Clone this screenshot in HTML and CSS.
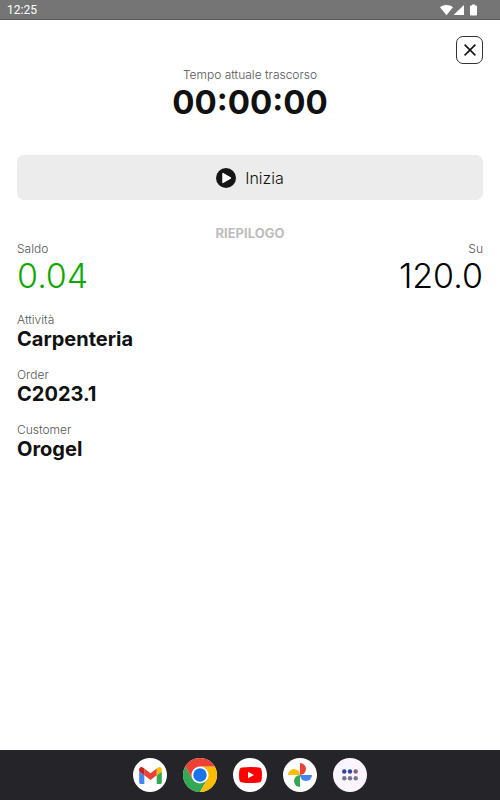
FILE: index.html
```
<!DOCTYPE html>
<html lang="it">
<head>
    <meta charset="UTF-8">
    <meta name="viewport" content="width=device-width, initial-scale=1.0">
    <title>Tempo attuale trascorso</title>
    <link rel="stylesheet" href="styles.css">
</head>
<body>

    <div class="status-bar">
        <span>12:25</span>
        <svg width="40" height="12" viewBox="0 0 40 12" fill="#fff">
            <!-- Wifi -->
            <path d="M0 3.2C3.6 0.2 9.4 0.2 13 3.2L6.5 11.2z" />
            <!-- Segnale -->
            <path d="M24 1v10H13.5z" />
            <!-- Batteria -->
            <path d="M32 .5h3v1h1.2q.8 0 .8.8v8.4q0 .8-.8.8h-5.4q-.8 0-.8-.8V2.3q0-.8.8-.8H32z" />
        </svg>
    </div>

    <main class="content">
        <div class="toolbar">
            <button class="close-button" type="button" aria-label="Chiudi">
                <svg width="12" height="12" viewBox="0 0 12 12" fill="none" stroke="#111" stroke-width="1.5">
                    <path d="M.6.6l10.8 10.8M11.4.6L.6 11.4" />
                </svg>
            </button>
        </div>

        <div class="timer">
            <span class="label">Tempo attuale trascorso</span>
            <span class="timer-value">00:00:00</span>
        </div>

        <button class="start-button" type="button">
            <svg width="20" height="20" viewBox="0 0 20 20">
                <circle cx="10" cy="10" r="10" fill="#151515" />
                <path d="M6.8 5.2v9.6l8.2-4.8z" fill="#fff" stroke="#fff" stroke-linejoin="round" />
            </svg>
            <span>Inizia</span>
        </button>

        <h2 class="summary-title">RIEPILOGO</h2>

        <div class="totals">
            <div class="total">
                <span class="label">Saldo</span>
                <span class="total-value positive">0.04</span>
            </div>
            <div class="total total-right">
                <span class="label">Su</span>
                <span class="total-value">120.0</span>
            </div>
        </div>

        <div class="details">
            <div class="detail">
                <span class="label">Attività</span>
                <span class="detail-value">Carpenteria</span>
            </div>
            <div class="detail">
                <span class="label">Order</span>
                <span class="detail-value">C2023.1</span>
            </div>
            <div class="detail">
                <span class="label">Customer</span>
                <span class="detail-value">Orogel</span>
            </div>
        </div>
    </main>

    <nav class="dock">
        <button class="app" type="button" aria-label="Gmail">
            <svg width="23" height="17" viewBox="52 42 88 66">
                <path fill="#4285f4" d="M58 108h14V74L52 59v43c0 3.32 2.69 6 6 6" />
                <path fill="#34a853" d="M120 108h14c3.32 0 6-2.69 6-6V59l-20 15" />
                <path fill="#fbbc04" d="M120 48v26l20-15v-8c0-7.42-8.47-11.65-14.4-7.2" />
                <path fill="#ea4335" d="M72 74V48l24 18 24-18v26L96 92" />
                <path fill="#c5221f" d="M52 51v8l20 15V48l-5.6-4.2c-5.94-4.45-14.4-.22-14.4 7.2" />
            </svg>
        </button>
        <button class="app" type="button" aria-label="Chrome">
            <svg width="34" height="34" viewBox="0 0 48 48">
                <circle cx="24" cy="24" r="12" fill="#fff" />
                <path fill="#34a853" d="M24 48A24 24 0 0 1 3.2154 12l10.3923 18A12 12 0 0 0 34.3923 30z" />
                <path fill="#fbbc04" d="M24 12h20.7846A24 24 0 0 1 24 48l10.3923-18A12 12 0 0 0 24 12z" />
                <path fill="#ea4335" d="M3.2154 12A24 24 0 0 1 44.7846 12H24a12 12 0 0 0-10.3923 18z" />
                <circle cx="24" cy="24" r="9.5" fill="#1a73e8" />
            </svg>
        </button>
        <button class="app" type="button" aria-label="YouTube">
            <svg width="23" height="16" viewBox="0 0 23 16">
                <path fill="#f00" d="M3 .5Q11.5-.5 20 .5q2.3.3 2.6 2.5.7 5 0 10-.3 2.2-2.6 2.5-8.5 1-17 0Q.7 15.2.4 13q-.7-5 0-10Q.7.8 3 .5z" />
                <path fill="#fff" d="M9 4.7v6.6L15 8z" />
            </svg>
        </button>
        <button class="app" type="button" aria-label="Foto">
            <svg width="24" height="24" viewBox="0 0 24 24">
                <path fill="#ea4335" d="M12 0a6 6 0 0 1 0 12z" />
                <path fill="#4285f4" d="M24 12a6 6 0 0 1-12 0z" />
                <path fill="#34a853" d="M12 24a6 6 0 0 1 0-12z" />
                <path fill="#fbbc04" d="M0 12a6 6 0 0 1 12 0z" />
            </svg>
        </button>
        <button class="app app-drawer" type="button" aria-label="Tutte le app">
            <svg width="16" height="12" viewBox="0 0 16 12">
                <g fill="#30439a">
                    <circle cx="2.3" cy="2.5" r="2.2" />
                    <circle cx="8" cy="2.5" r="2.2" />
                </g>
                <circle cx="13.7" cy="2.5" r="2.2" fill="#8f5d79" />
                <g fill="#74748c">
                    <circle cx="2.3" cy="9.3" r="2.2" />
                    <circle cx="8" cy="9.3" r="2.2" />
                    <circle cx="13.7" cy="9.3" r="2.2" />
                </g>
            </svg>
        </button>
    </nav>

</body>
</html>
```

FILE: styles.css
```
* {
    box-sizing: border-box;
}
body {
    font-family: Inter, "Liberation Sans", sans-serif;
    display: flex;
    flex-direction: column;
    min-height: 100vh;
    margin: 0;
    background-color: #fff;
    color: #111;
}
button {
    border: none;
    padding: 0;
    font-family: inherit;
    color: inherit;
    cursor: pointer;
}
svg {
    display: block;
}
.status-bar {
    display: flex;
    align-items: center;
    justify-content: space-between;
    height: 20px;
    padding: 0 20px 0 7px;
    background-color: #757575;
    border-bottom: 1px solid #5c5659;
    color: #fff;
    font-family: Roboto, sans-serif;
    font-size: 12px;
}
.content {
    flex: 1;
    display: flex;
    flex-direction: column;
    padding: 16px 17px;
}
.toolbar {
    display: flex;
    justify-content: flex-end;
}
.close-button {
    display: flex;
    align-items: center;
    justify-content: center;
    width: 27px;
    height: 28px;
    border: 1px solid #333;
    border-radius: 7px;
    background-color: #fff;
}
.label {
    font-size: 12px;
    line-height: 16px;
    font-weight: 300;
    color: #555;
}
.timer {
    display: flex;
    flex-direction: column;
    align-items: center;
    margin-top: 3px;
}
.timer-value {
    font-size: 33px;
    line-height: 38px;
    font-weight: 700;
}
.start-button {
    display: flex;
    align-items: center;
    justify-content: center;
    gap: 9px;
    height: 45px;
    margin-top: 34px;
    border-radius: 7px;
    background-color: #ececec;
    font-size: 16px;
    font-weight: 300;
}
.summary-title {
    margin: 25px 0 0;
    font-size: 13px;
    line-height: 16px;
    font-weight: 700;
    color: #bdbdbd;
    text-align: center;
}
.totals {
    display: flex;
    justify-content: space-between;
}
.total,
.detail {
    display: flex;
    flex-direction: column;
}
.total-right {
    align-items: flex-end;
}
.total-value {
    font-size: 34px;
    line-height: 38px;
    font-weight: 300;
    color: #000;
}
.total-value.positive {
    color: #12a802;
}
.details {
    display: flex;
    flex-direction: column;
    gap: 16px;
    margin-top: 17px;
}
.detail-value {
    font-size: 20px;
    line-height: 23px;
    font-weight: 700;
}
.dock {
    display: flex;
    align-items: center;
    justify-content: center;
    gap: 16px;
    height: 50px;
    background-color: #252429;
}
.app {
    display: flex;
    align-items: center;
    justify-content: center;
    width: 34px;
    height: 34px;
    border-radius: 50%;
    background-color: #fff;
}
.app-drawer {
    background-color: #fbf5ff;
}
```
